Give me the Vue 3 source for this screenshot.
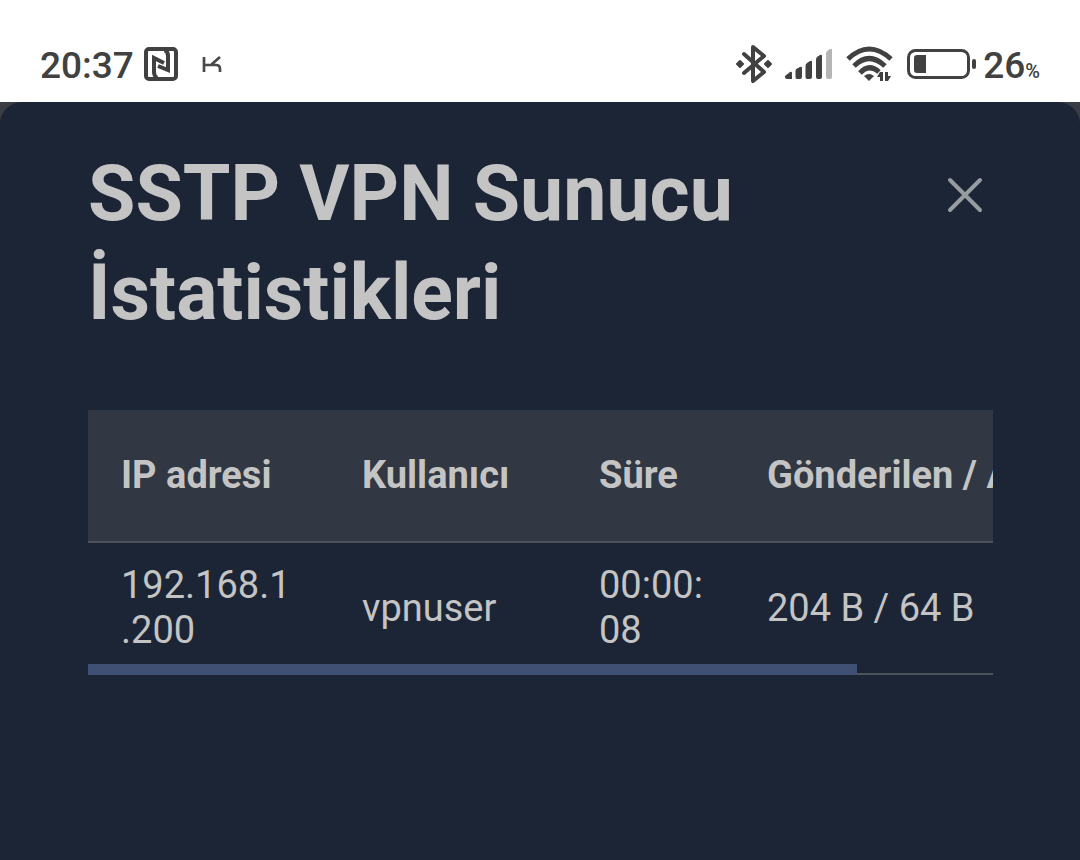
<script setup>
const columns = ['IP adresi', 'Kullanıcı', 'Süre', 'Gönderilen / Alınan']
const sessions = [
  { ip: ['192.168.1', '.200'], user: 'vpnuser', time: ['00:00:', '08'], traffic: '204 B / 64 B' },
]
</script>

<template>
  <div class="screen">
    <header class="status">
      <div class="group">
        <span class="clock">20:37</span>
        <svg class="nfc" width="34" height="34" viewBox="0 0 34 34" aria-hidden="true">
          <rect x="2" y="2" width="30" height="30" rx="3" fill="none" stroke="#414141" stroke-width="4" />
          <path d="M13 31Q10 29 10 25V11L20 16M21 3Q24 5 24 9V23L14 19" fill="none" stroke="#414141" stroke-width="4" />
        </svg>
        <svg class="kmark" width="20" height="18" viewBox="0 0 20 18" aria-hidden="true">
          <path d="M2 2V17M2 10H11M18 2L10 9Q9 10 11 10H14Q18 10 18 14V17" fill="none" stroke="#494949" stroke-width="2.7" />
        </svg>
      </div>
      <div class="group">
        <svg width="38" height="40" viewBox="0 0 38 40" aria-hidden="true">
          <path d="M10 10L30 28L19 37V3L30 12L10 29" fill="none" stroke="#414141" stroke-width="4" stroke-linejoin="round" stroke-linecap="round" />
          <path d="M6 17L9 20L6 23L3 20ZM34 17L37 20L34 23L31 20Z" fill="#414141" stroke="#414141" stroke-width="2" stroke-linejoin="round" />
        </svg>
        <svg class="signal" width="48" height="32" viewBox="0 0 48 32" aria-hidden="true">
          <g fill="#414141">
            <path d="M0 28L5 24Q7 23 7 25V31H2Q0 31 0 29Z" />
            <path d="M10.500 23Q10.500 21 12 20.500L15 19Q17 18 17 20V29Q17 31 15 31H12Q10.500 31 10.500 29Z" />
            <path d="M20.500 18Q20.500 16 22 15L25 13Q27 12 27 14V29Q27 31 25 31H22Q20.500 31 20.500 29Z" />
            <path d="M31 12Q31 10 32 9L35 7Q37 6 37 8V29Q37 31 35 31H33Q31 31 31 29Z" />
          </g>
          <path d="M41 6Q41 4 42 3L45 1Q47 0 47 2V29Q47 31 45 31H43Q41 31 41 29Z" fill="#b5b5b5" />
        </svg>
        <svg class="wifi" width="47" height="36" viewBox="0 0 47 36" aria-hidden="true">
          <g fill="none" stroke="#414141" stroke-width="5">
            <path d="M2 13Q23 -7 45 13" />
            <path d="M8 20Q23 5 39 20" />
            <path d="M14 27Q23 17 33 26" />
          </g>
          <path d="M18 30Q23 26 28 30L23 35Z" fill="#414141" />
          <path d="M31 31L34 26H37V35H34V31ZM39 26H42V30H45L42 35H39Z" fill="#414141" />
        </svg>
        <svg class="battery" width="70" height="32" viewBox="0 0 70 32" aria-hidden="true">
          <rect x="1.500" y="2.500" width="60" height="27" rx="7" fill="none" stroke="#414141" stroke-width="3" />
          <path d="M10 7H19V25H10Q7 25 7 22V10Q7 7 10 7Z" fill="#414141" />
          <rect x="65" y="11" width="4" height="10" rx="2" fill="#414141" />
        </svg>
        <span class="level">26<small>%</small></span>
      </div>
    </header>

    <div class="backdrop">
      <main class="dialog">
        <div class="heading">
          <h1>SSTP VPN Sunucu İstatistikleri</h1>
          <button class="close" type="button" aria-label="Kapat">
            <svg width="38" height="38" viewBox="0 0 38 38" aria-hidden="true">
              <path d="M4 4L34 34M34 4L4 34" fill="none" stroke="#969c9f" stroke-width="4" stroke-linecap="round" />
            </svg>
          </button>
        </div>

        <div class="table-frame">
          <div class="table-scroll">
            <table>
              <colgroup>
                <col class="c-ip" /><col class="c-user" /><col class="c-time" /><col class="c-traffic" />
              </colgroup>
              <thead>
                <tr><th v-for="c in columns" :key="c" scope="col">{{ c }}</th></tr>
              </thead>
              <tbody>
                <tr v-for="s in sessions" :key="s.user">
                  <td>{{ s.ip[0] }}<wbr />{{ s.ip[1] }}</td>
                  <td>{{ s.user }}</td>
                  <td>{{ s.time[0] }}<wbr />{{ s.time[1] }}</td>
                  <td>{{ s.traffic }}</td>
                </tr>
              </tbody>
            </table>
          </div>
          <div class="thumb"></div>
        </div>
      </main>
    </div>
  </div>
</template>

<style>
body {
  margin: 0;
  background: #1c2535;
}
</style>

<style scoped>
.screen {
  min-height: 100vh;
  display: flex;
  flex-direction: column;
  font-family: Roboto, "Liberation Sans", sans-serif;
  color: #c4c4c4;
}
.status {
  height: 102px;
  box-sizing: border-box;
  padding: 26px 40px 0;
  display: flex;
  align-items: center;
  justify-content: space-between;
  background: #fff;
  color: #414141;
}
.group {
  display: flex;
  align-items: center;
}
.clock,
.level {
  font-size: 37px;
  line-height: 44px;
  font-weight: 500;
  padding-top: 4px;
}
.nfc {
  margin-left: 10px;
}
.kmark {
  margin-left: 24px;
}
.signal,
.wifi {
  margin-left: 13px;
}
.battery {
  margin-left: 14px;
}
.level {
  margin-left: 6px;
}
.level small {
  font-size: 20px;
  line-height: 20px;
}
.backdrop {
  flex: 1;
  display: flex;
  background: #3a3e44;
}
.dialog {
  flex: 1;
  min-width: 0;
  padding: 43px 87px 44px 88px;
  border-radius: 22px 22px 0 0;
  background: #1c2535;
}
.heading {
  display: flex;
  align-items: flex-start;
  justify-content: space-between;
  gap: 88px;
}
h1 {
  margin: 0;
  font-size: 77px;
  line-height: 99px;
  font-weight: 700;
}
.close {
  margin: 31px 9px 0 0;
  padding: 0;
  border: 0;
  background: none;
  line-height: 0;
}
.table-frame {
  position: relative;
  margin-top: 67px;
}
.table-scroll {
  overflow: hidden;
}
table {
  width: 1066px;
  table-layout: fixed;
  border-collapse: separate;
  border-spacing: 0;
  font-size: 38px;
  line-height: 45px;
}
.c-ip {
  width: 241px;
}
.c-user {
  width: 237px;
}
.c-time {
  width: 168px;
}
th,
td {
  text-align: left;
  vertical-align: middle;
  border-bottom: 2px solid #4c535f;
}
th {
  padding: 43px 33px;
  font-weight: 700;
  background: #313743;
  white-space: nowrap;
}
td {
  padding: 20px 30px 20px 33px;
}
.thumb {
  position: absolute;
  left: 0;
  bottom: 0;
  width: 85%;
  height: 11px;
  background: #3f5074;
}
</style>
